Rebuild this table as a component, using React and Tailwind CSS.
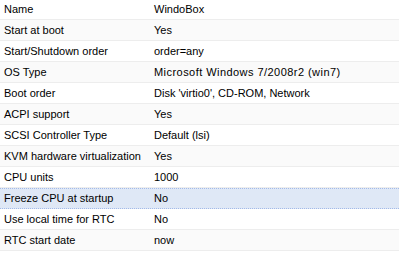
const rows = [
  { label: 'Name', value: 'WindoBox' },
  { label: 'Start at boot', value: 'Yes' },
  { label: 'Start/Shutdown order', value: 'order=any' },
  { label: 'OS Type', value: 'Microsoft Windows 7/2008r2 (win7)', wide: true },
  { label: 'Boot order', value: "Disk 'virtio0', CD-ROM, Network" },
  { label: 'ACPI support', value: 'Yes' },
  { label: 'SCSI Controller Type', value: 'Default (lsi)' },
  { label: 'KVM hardware virtualization', value: 'Yes' },
  { label: 'CPU units', value: '1000' },
  { label: 'Freeze CPU at startup', value: 'No' },
  { label: 'Use local time for RTC', value: 'No' },
  { label: 'RTC start date', value: 'now' },
];

export default function App() {
  const selected = 9;
  return (
    <div className="w-[399px] h-[274px] bg-white overflow-hidden font-['Liberation_Sans',Arial,sans-serif] text-[11px] text-black">
      <div className="-mt-px">
        {rows.map((row, i) => {
          const isSel = i === selected;
          const rowCls = isSel
            ? 'bg-[#dfe8f6] border-y border-dotted border-[#a3bae9]'
            : i % 2 === 1
              ? 'bg-[#fafafa] border-t border-t-[#fafafa] border-b border-b-[#ededed]'
              : 'bg-white border-t border-t-white border-b border-b-[#ededed]';
          return (
            <div key={row.label} className={`flex items-center h-[21px] ${rowCls}`}>
              <div className="w-[150px] pl-[4px] whitespace-nowrap">{row.label}</div>
              <div className={`flex-1 pl-[4px] whitespace-nowrap ${row.wide ? 'tracking-[0.45px]' : ''}`}>
                {row.value}
              </div>
            </div>
          );
        })}
      </div>
    </div>
  );
}
